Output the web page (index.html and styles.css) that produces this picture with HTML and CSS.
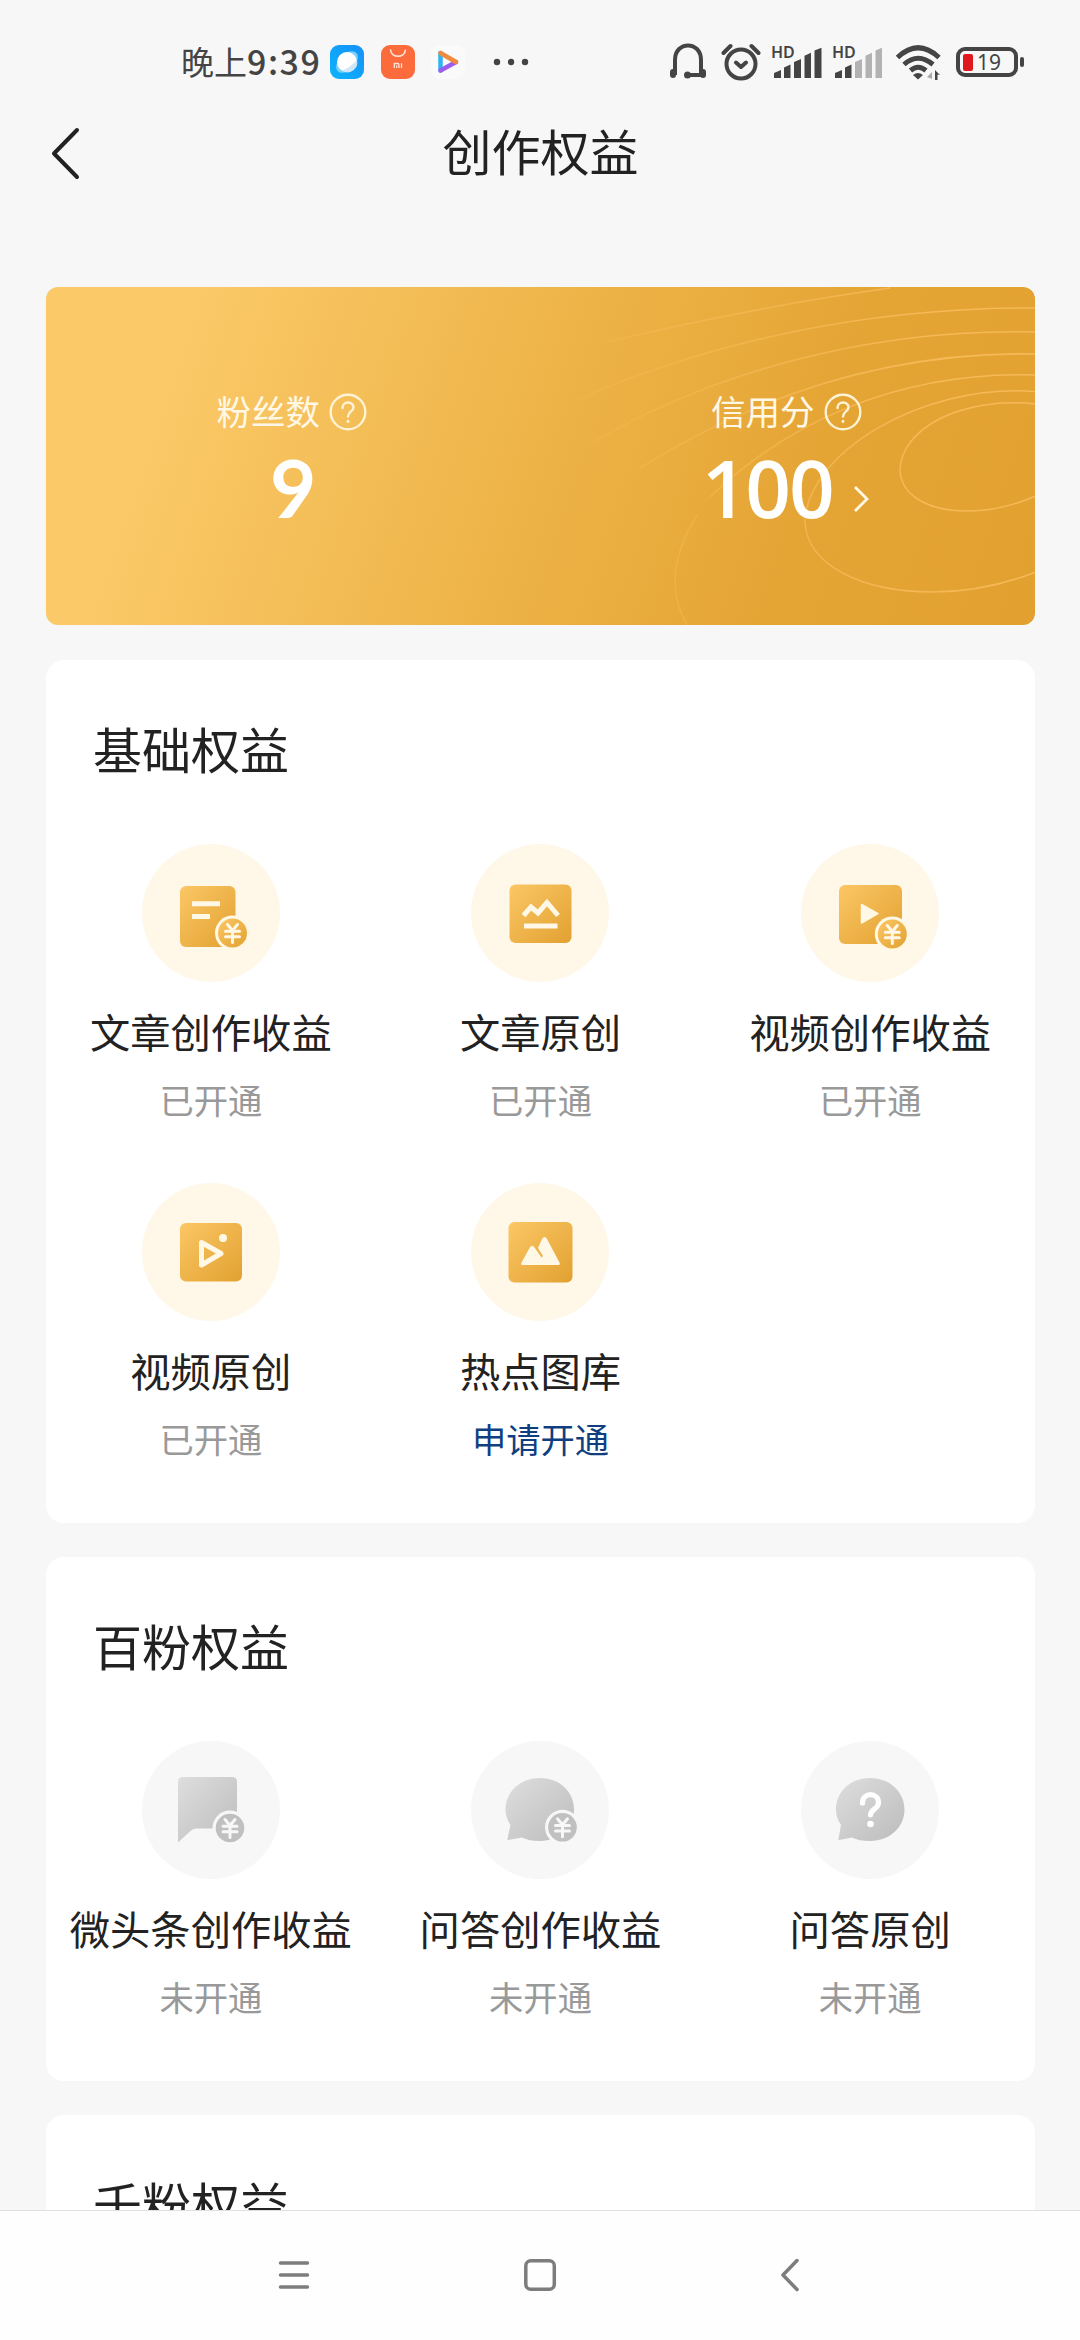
FILE: index.html
```html
<!DOCTYPE html>
<html lang="zh-CN">
<head>
    <meta charset="UTF-8">
    <meta name="viewport" content="width=device-width, initial-scale=1.0">
    <title>创作权益</title>
    <link rel="stylesheet" href="styles.css">
</head>
<body>
    <!-- Shared gradients and the coin badge -->
    <svg class="defs" width="0" height="0">
        <defs>
            <linearGradient id="gold" x1="0" y1="0" x2="1" y2="1">
                <stop offset="0" stop-color="#fbc765"/>
                <stop offset="1" stop-color="#e2a131"/>
            </linearGradient>
            <linearGradient id="gray" x1="0" y1="0" x2="1" y2="1">
                <stop offset="0" stop-color="#dedede"/>
                <stop offset="1" stop-color="#bcbcbc"/>
            </linearGradient>
            <symbol id="yen" viewBox="0 0 36 36">
                <path d="M13 10 18 16 23 10M11 16.800H25M11 22.300H25M18 16.500V28" fill="none" stroke-width="3" stroke-linecap="round"/>
            </symbol>
        </defs>
    </svg>

    <div class="status-bar">
        <span class="time">晚上<b>9:39</b></span>
        <svg class="app" width="34" height="34" viewBox="0 0 34 34">
            <defs><linearGradient id="blue" x1="0" y1="1" x2="1" y2="0"><stop offset="0" stop-color="#0cb4fb"/><stop offset="1" stop-color="#1690f8"/></linearGradient></defs>
            <rect width="34" height="34" rx="9" fill="url(#blue)"/>
            <ellipse cx="17" cy="17" rx="13" ry="8" fill="#7fd0fb" transform="rotate(-45 17 17)"/>
            <circle cx="17" cy="17" r="10" fill="#fff"/>
            <path d="M27 15A10 10 0 0 1 12 25.800Q21 22 27 15Z" fill="#cfe6f6"/>
        </svg>
        <svg class="app" width="34" height="34" viewBox="0 0 34 34">
            <rect width="34" height="34" rx="9" fill="#fb6b3c"/>
            <path d="M9.500 4.500C10 13.500 24 13.500 24.500 4.500" fill="none" stroke="#ffe4d8" stroke-width="1.600"/>
            <path d="M13.300 23V18.500H16.500Q18 18.500 18 20V23M15.700 20.500V23M20.500 18.200V23" fill="none" stroke="#ffe4d8" stroke-width="1.300"/>
        </svg>
        <svg class="app" width="34" height="34" viewBox="0 0 34 34">
            <rect width="34" height="34" rx="9" fill="#fafafa"/>
            <path d="M9.500 8V25.500" stroke="#2fb3f5" stroke-width="4.500" stroke-linecap="round"/>
            <path d="M9.500 25.500 25 17" stroke="#9a5df0" stroke-width="4.500" stroke-linecap="round"/>
            <path d="M9.500 8 25 17" stroke="#f08a3c" stroke-width="4.500" stroke-linecap="round"/>
        </svg>
        <svg class="more" width="36" height="8" viewBox="0 0 36 8" fill="#444">
            <circle cx="4" cy="4" r="3.200"/><circle cx="18" cy="4" r="3.200"/><circle cx="32" cy="4" r="3.200"/>
        </svg>

        <div class="status-right">
            <svg width="38" height="38" viewBox="0 0 38 38" fill="none" stroke="#444" stroke-width="4">
                <path d="M6 32V17C6 -2.500 32 -2.500 32 17V32M17 32H32"/>
                <rect x="1" y="26" width="6" height="9" rx="3" fill="#444" stroke="none"/>
                <rect x="31" y="26" width="6" height="9" rx="3" fill="#444" stroke="none"/>
                <circle cx="18.500" cy="32" r="3.500" fill="#444" stroke="none"/>
            </svg>
            <svg class="alarm" width="40" height="38" viewBox="0 0 40 38" fill="none" stroke="#444" stroke-width="4" stroke-linecap="round" stroke-linejoin="round">
                <circle cx="20" cy="21" r="14.500"/>
                <path d="M2.500 10 9.500 3M37.500 10 30.500 3M15 19.500 20 24 25 19.500"/>
            </svg>
            <svg class="signal" width="51" height="52" viewBox="0 -8 51 52" fill="#444">
                <text x="0" y="14" class="hd">HD</text>
                <path d="M3 29 10 26V34H3ZM13 23.500 19.500 20.500V34H13ZM23 18 30 15V34H23ZM33.500 11.700 40 8.700V34H33.500ZM43.500 6.500 50.500 3.700V34H43.500Z"/>
            </svg>
            <svg class="signal" width="51" height="52" viewBox="0 -8 51 52" fill="#444">
                <text x="0" y="14" class="hd">HD</text>
                <path d="M3 29 10 26V34H3ZM13 23.500 19.500 20.500V34H13Z"/>
                <path d="M23 18 30 15V34H23ZM33.500 11.700 40 8.700V34H33.500ZM43.500 6.500 50 3.700V34H43.500Z" fill="#b2b2b2"/>
            </svg>
            <svg class="wifi" width="48" height="36" viewBox="0 0 48 36" fill="none" stroke="#444" stroke-width="5">
                <path d="M2.500 13.500Q23 -6 44 13.500M9 20.500Q23 8 38 20.500M15.500 26.500Q23 20 31 26.500"/>
                <path d="M18 31Q23 27 28 31L23 35.500Z" fill="#444" stroke="none"/>
                <path d="M37 28V35L32 33ZM37 26" fill="#aaa" stroke="none"/>
                <path d="M40 26 45 31 42.500 30.500V36H40Z" fill="#444" stroke="none"/>
            </svg>
            <div class="battery"><i></i><span>19</span></div>
        </div>
    </div>

    <div class="nav-bar">
        <svg width="32" height="54" viewBox="0 0 32 54" fill="none" stroke="#222" stroke-width="4" stroke-linecap="round" stroke-linejoin="round">
            <path d="M29 4 6 27.500 29 51"/>
        </svg>
        <h1>创作权益</h1>
    </div>

    <main class="content">
        <section class="hero">
            <svg class="rings" width="989" height="338" viewBox="0 0 989 338">
                <defs>
                    <linearGradient id="ring" gradientUnits="userSpaceOnUse" x1="530" y1="0" x2="900" y2="0">
                        <stop offset="0" stop-color="#ffc56a" stop-opacity="0.100"/>
                        <stop offset="0.500" stop-color="#ffc56a" stop-opacity="0.400"/>
                        <stop offset="1" stop-color="#ffc56a" stop-opacity="0.650"/>
                    </linearGradient>
                </defs>
                <g fill="none" stroke="url(#ring)" stroke-width="1.600">
                    <path d="M990 117C915 109 854 142 854 184C856 210 884 224 921 224Q955 224 990 209"/>
                    <path d="M990 104.500C870 96 759 170 759 236C762 278 815 305 887 305Q938 305 990 285"/>
                    <path d="M990 88C850 84 740 137 664 210M651 228C626 268 622 305 641 338"/>
                    <path d="M990 67C830 64 700 115 594 181"/>
                    <path d="M990 45C820 41 660 88 546 156"/>
                    <path d="M990 21C820 20 660 56 531 113"/>
                    <path d="M844 1C750 14 650 34 561 55"/>
                </g>
            </svg>
            <div class="stat">
                <div class="stat-label"><span>粉丝数</span>
                    <svg class="help" width="38" height="38" viewBox="0 0 38 38" fill="none" stroke="#fff3d6" stroke-width="2.400" stroke-linecap="round">
                        <circle cx="19" cy="19" r="17.300"/>
                        <path d="M13.500 15C13.500 7.500 24.500 8 24.500 14.500C24.500 18.500 19 18.500 19 23.500"/>
                        <circle cx="19" cy="28.300" r="1" fill="#fff3d6" stroke-width="1.200"/>
                    </svg>
                </div>
                <div class="stat-value">9</div>
            </div>
            <div class="stat">
                <div class="stat-label"><span>信用分</span>
                    <svg class="help" width="38" height="38" viewBox="0 0 38 38" fill="none" stroke="#fff3d6" stroke-width="2.400" stroke-linecap="round">
                        <circle cx="19" cy="19" r="17.300"/>
                        <path d="M13.500 15C13.500 7.500 24.500 8 24.500 14.500C24.500 18.500 19 18.500 19 23.500"/>
                        <circle cx="19" cy="28.300" r="1" fill="#fff3d6" stroke-width="1.200"/>
                    </svg>
                </div>
                <div class="stat-value credit">100
                    <svg class="arrow" width="21" height="28" viewBox="0 0 21 28" fill="none" stroke="#fff8e6" stroke-width="2.800">
                        <path d="M2 2 14 14 2 26"/>
                    </svg>
                </div>
            </div>
        </section>

        <section class="card">
            <h2>基础权益</h2>
            <div class="grid">
                <div class="item">
                    <svg class="icon" viewBox="0 0 138 138">
                        <rect x="38" y="42" width="55.500" height="61" rx="6" fill="url(#gold)"/>
                        <path d="M50 59.700H78M50 72.400H68" stroke="#fff8e6" stroke-width="5"/>
                        <circle cx="90.500" cy="89" r="17.500" fill="#fff8e6"/>
                        <circle cx="90.500" cy="89" r="14.500" fill="url(#gold)"/>
                        <use href="#yen" x="72.500" y="70.500" width="36" height="36" stroke="#fff8e6"/>
                    </svg>
                    <div class="name">文章创作收益</div>
                    <div class="state">已开通</div>
                </div>
                <div class="item">
                    <svg class="icon" viewBox="0 0 138 138">
                        <rect x="38.500" y="40.500" width="62" height="58.500" rx="6" fill="url(#gold)"/>
                        <path d="M52.500 71.500 60 63 67 69 76 58.500 87 71.500M53 82H86.500" fill="none" stroke="#fff8e6" stroke-width="5"/>
                    </svg>
                    <div class="name">文章原创</div>
                    <div class="state">已开通</div>
                </div>
                <div class="item">
                    <svg class="icon" viewBox="0 0 138 138">
                        <rect x="38" y="41" width="63" height="59" rx="6" fill="url(#gold)"/>
                        <path d="M60.500 60.500V79L77 69.700Z" fill="#fff8e6" stroke="#fff8e6" stroke-width="1.500" stroke-linejoin="round"/>
                        <circle cx="91.300" cy="90" r="17.500" fill="#fff8e6"/>
                        <circle cx="91.300" cy="90" r="14.500" fill="url(#gold)"/>
                        <use href="#yen" x="73.300" y="71.500" width="36" height="36" stroke="#fff8e6"/>
                    </svg>
                    <div class="name">视频创作收益</div>
                    <div class="state">已开通</div>
                </div>
                <div class="item">
                    <svg class="icon" viewBox="0 0 138 138">
                        <rect x="38" y="40" width="62" height="58.500" rx="6" fill="url(#gold)"/>
                        <path d="M59.500 59.500V82L79 70.500Z" fill="none" stroke="#fff8e6" stroke-width="5" stroke-linejoin="round"/>
                        <circle cx="81" cy="55" r="4" fill="#fff8e6"/>
                    </svg>
                    <div class="name">视频原创</div>
                    <div class="state">已开通</div>
                </div>
                <div class="item">
                    <svg class="icon" viewBox="0 0 138 138">
                        <rect x="37.500" y="39" width="64" height="60.500" rx="6" fill="url(#gold)"/>
                        <path d="M51 82Q49.500 81.500 50.500 79.500L58.500 65Q61 61 63.500 64.500L70.500 74.500 72 73 67 65 71 56Q73.500 52 76 56L88.500 79.500Q89.500 82 87.500 82Z" fill="#fff8e6"/>
                    </svg>
                    <div class="name">热点图库</div>
                    <div class="state apply">申请开通</div>
                </div>
            </div>
        </section>

        <section class="card">
            <h2>百粉权益</h2>
            <div class="grid">
                <div class="item locked">
                    <svg class="icon" viewBox="0 0 138 138">
                        <path d="M41 36H90Q95 36 95 41V87.600H55Q51 87.600 48.500 90L36 101.500V41Q36 36 41 36Z" fill="url(#gray)"/>
                        <circle cx="88" cy="87" r="17.500" fill="#f7f7f7"/>
                        <circle cx="88" cy="87" r="14.300" fill="#c0c0c0"/>
                        <use href="#yen" x="70" y="68.500" width="36" height="36" stroke="#f7f7f7"/>
                    </svg>
                    <div class="name">微头条创作收益</div>
                    <div class="state">未开通</div>
                </div>
                <div class="item locked">
                    <svg class="icon" viewBox="0 0 138 138">
                        <path d="M69 37C89 37 103 51 103 68.500S89 100 69 100Q58 100 51 96.500L37 99Q36 99 36.500 97.500L39.500 84Q34.500 77 34.500 68.500C34.500 51 49 37 69 37Z" fill="url(#gray)"/>
                        <circle cx="91.500" cy="86.300" r="17.500" fill="#f7f7f7"/>
                        <circle cx="91.500" cy="86.300" r="14.300" fill="#c0c0c0"/>
                        <use href="#yen" x="73.500" y="67.800" width="36" height="36" stroke="#f7f7f7"/>
                    </svg>
                    <div class="name">问答创作收益</div>
                    <div class="state">未开通</div>
                </div>
                <div class="item locked">
                    <svg class="icon" viewBox="0 0 138 138">
                        <path d="M69 37C89 37 103.500 51 103.500 68.500S89 100 69 100Q58 100 51 96.500L38 99Q37 99 37.500 97.500L40 84Q35 77 35 68.500C35 51 49 37 69 37Z" fill="url(#gray)"/>
                        <path d="M61.500 62C61.500 50.500 77.500 51.500 77.500 61.500C77.500 68.500 70 67 69.500 74" fill="none" stroke="#fff" stroke-width="5.200" stroke-linecap="round"/>
                        <circle cx="69.500" cy="83" r="3.300" fill="#fff"/>
                    </svg>
                    <div class="name">问答原创</div>
                    <div class="state">未开通</div>
                </div>
            </div>
        </section>

        <section class="card">
            <h2>千粉权益</h2>
        </section>
    </main>

    <div class="system-nav">
        <svg width="48" height="48" viewBox="0 0 48 48"><path d="M10.500 12H37.500M10.500 24H37.500M10.500 36H37.500"/></svg>
        <svg width="48" height="48" viewBox="0 0 48 48"><rect x="7.800" y="9.800" width="28.500" height="28.500" rx="5"/></svg>
        <svg width="48" height="48" viewBox="0 0 48 48"><path d="M31 9.500 17 24 31 38.500"/></svg>
    </div>
</body>
</html>
```
FILE: styles.css
```css
* {
    box-sizing: border-box;
}

body {
    margin: 0;
    width: 1080px;
    height: 2340px;
    overflow: hidden;
    display: flex;
    flex-direction: column;
    background-color: #f7f7f7;
    color: #222;
    font-family: "Noto Sans CJK SC", sans-serif;
}

svg {
    display: block;
    flex-shrink: 0;
}

.defs {
    position: absolute;
}

/* Status bar */
.status-bar {
    height: 124px;
    padding: 0 56px 0 181px;
    display: flex;
    align-items: center;
    color: #444;
    flex-shrink: 0;
}

.time {
    width: 149px;
    padding-bottom: 3px;
    font-size: 33px;
    line-height: 40px;
    white-space: nowrap;
}

.time b {
    font-size: 34px;
    font-weight: 500;
    letter-spacing: 1.5px;
}

.app {
    margin-right: 16.5px;
}

.more {
    margin-left: 11px;
}

.status-right {
    margin-left: auto;
    display: flex;
    align-items: center;
}

.alarm {
    margin-left: 14px;
}

.signal {
    margin-left: 10px;
}

.hd {
    font-family: "Noto Sans", sans-serif;
    font-size: 16px;
    font-weight: 600;
}

.wifi {
    margin-left: 12px;
    margin-right: 13px;
}

.battery {
    position: relative;
    width: 62px;
    height: 30px;
    border: 4px solid #444;
    border-radius: 9px;
    display: flex;
    align-items: center;
    padding-left: 3px;
    margin-right: 6px;
}

.battery::after {
    content: "";
    position: absolute;
    right: -10px;
    top: 6px;
    width: 4px;
    height: 10px;
    border-radius: 2px;
    background-color: #444;
}

.battery i {
    width: 10px;
    height: 17px;
    border-radius: 2px;
    background-color: #e0191f;
}

.battery span {
    margin-left: 4px;
    font-family: "Noto Sans", sans-serif;
    font-size: 21px;
    line-height: 22px;
}

/* Title bar */
.nav-bar {
    height: 58px;
    display: grid;
    grid-template-columns: 50px 1fr 50px;
    align-items: center;
    padding: 0 47px 0 48px;
    margin-bottom: 105px;
    flex-shrink: 0;
}

.nav-bar h1 {
    margin: 0;
    padding-bottom: 6px;
    font-size: 49px;
    line-height: 52px;
    font-weight: 400;
    text-align: center;
}

.content {
    flex: 1;
    min-height: 0;
    overflow: hidden;
    padding: 0 45px 0 46px;
    display: flex;
    flex-direction: column;
    gap: 34px;
}

/* Score banner */
.hero {
    position: relative;
    height: 338px;
    flex-shrink: 0;
    margin-bottom: 1px;
    border-radius: 12px;
    overflow: hidden;
    background: linear-gradient(109deg, #fbc968 14%, #edb347 50%, #e5a535 75%, #e2a12f 100%);
    display: flex;
    color: #fff;
}

.rings {
    position: absolute;
    left: 0;
    top: 0;
}

.stat {
    position: relative;
    flex: 1;
    padding-top: 100px;
    display: flex;
    flex-direction: column;
    align-items: center;
}

.stat-label {
    display: flex;
    align-items: center;
    gap: 9px;
    height: 50px;
    margin-right: 3px;
    font-size: 34.5px;
    line-height: 46px;
    color: #fff8e6;
}

.stat-label span {
    padding-bottom: 4px;
}

.stat-value {
    display: flex;
    align-items: center;
    margin-top: 2px;
    font-family: Lato, sans-serif;
    font-size: 80px;
    font-weight: 700;
    line-height: 96px;
}

.credit {
    gap: 20px;
    font-family: "Open Sans", sans-serif;
    font-weight: 600;
    letter-spacing: -2px;
}

.arrow {
    margin-top: 23px;
}

/* Benefit cards */
.card {
    flex-shrink: 0;
    background-color: #fff;
    border-radius: 18px;
    padding: 52px 0 58px;
}

.card h2 {
    margin: 0 0 60px 47px;
    font-size: 49px;
    line-height: 72px;
    font-weight: 400;
}

.grid {
    display: grid;
    grid-template-columns: repeat(3, 1fr);
    row-gap: 57px;
}

.item {
    height: 282px;
    text-align: center;
}

.icon {
    width: 138px;
    height: 138px;
    margin: 0 auto;
    border-radius: 50%;
    background-color: #fff8e8;
}

.locked .icon {
    background-color: #f7f7f7;
}

.name {
    margin-top: 21px;
    font-size: 40.3px;
    line-height: 56px;
    white-space: nowrap;
}

.state {
    margin-top: 16px;
    font-size: 34.3px;
    line-height: 48px;
    color: #999;
}

.apply {
    color: #0f3f80;
}

/* System navigation */
.system-nav {
    height: 130px;
    flex-shrink: 0;
    padding: 0 266px 2px 270px;
    border-top: 1px solid #e0e0e0;
    background-color: #fefefe;
    display: flex;
    align-items: center;
    justify-content: space-between;
}

.system-nav svg {
    fill: none;
    stroke: #7d7d7d;
    stroke-width: 3.5;
    stroke-linecap: round;
    stroke-linejoin: round;
}
```
